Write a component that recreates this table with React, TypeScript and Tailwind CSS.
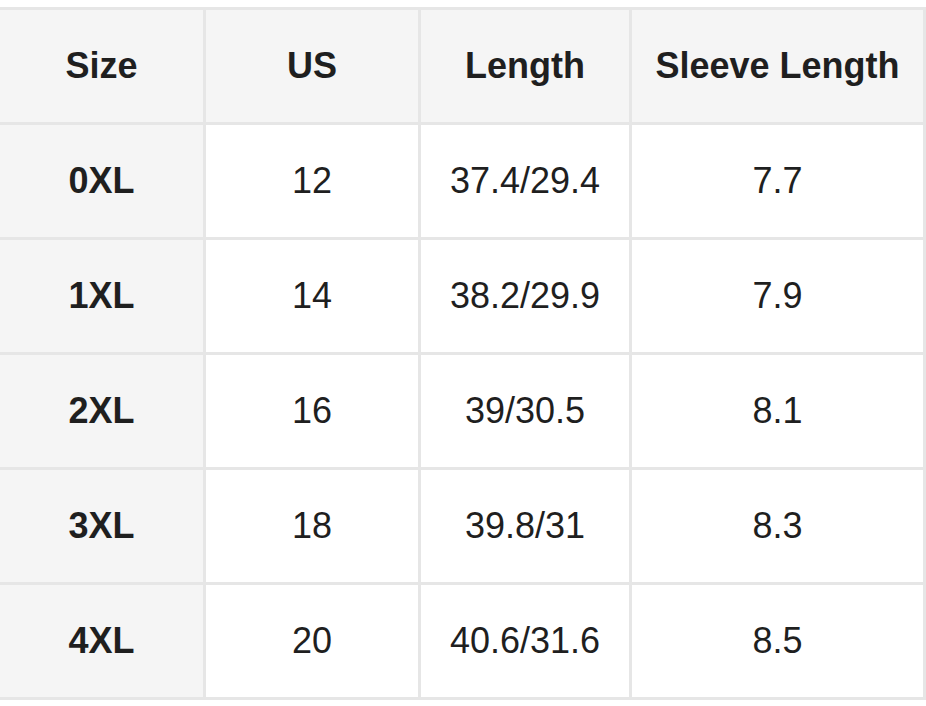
const headers = ["Size", "US", "Length", "Sleeve Length"]

const rows = [
  ["0XL", "12", "37.4/29.4", "7.7"],
  ["1XL", "14", "38.2/29.9", "7.9"],
  ["2XL", "16", "39/30.5", "8.1"],
  ["3XL", "18", "39.8/31", "8.3"],
  ["4XL", "20", "40.6/31.6", "8.5"],
]

export default function App() {
  return (
    <div className="w-[926px] h-[706px] bg-white pt-[7px] font-['Liberation_Sans',Arial,sans-serif] text-[#1f1f1f]">
      <div className="grid grid-cols-[203px_212px_208px_291px] auto-rows-[112px] gap-[3px] bg-[#e6e6e6] border-t-[3px] border-r-[3px] border-b-[3px] border-[#e6e6e6]">
        {headers.map((h) => (
          <div key={h} className="bg-[#f5f5f5] flex items-center justify-center text-[36px] font-bold">
            {h}
          </div>
        ))}
        {rows.map((row) =>
          row.map((cell, i) => (
            <div
              key={row[0] + i}
              className={
                i === 0
                  ? "bg-[#f5f5f5] flex items-center justify-center text-[36px] font-bold"
                  : "bg-white flex items-center justify-center text-[36px]"
              }
            >
              {cell}
            </div>
          ))
        )}
      </div>
    </div>
  )
}
